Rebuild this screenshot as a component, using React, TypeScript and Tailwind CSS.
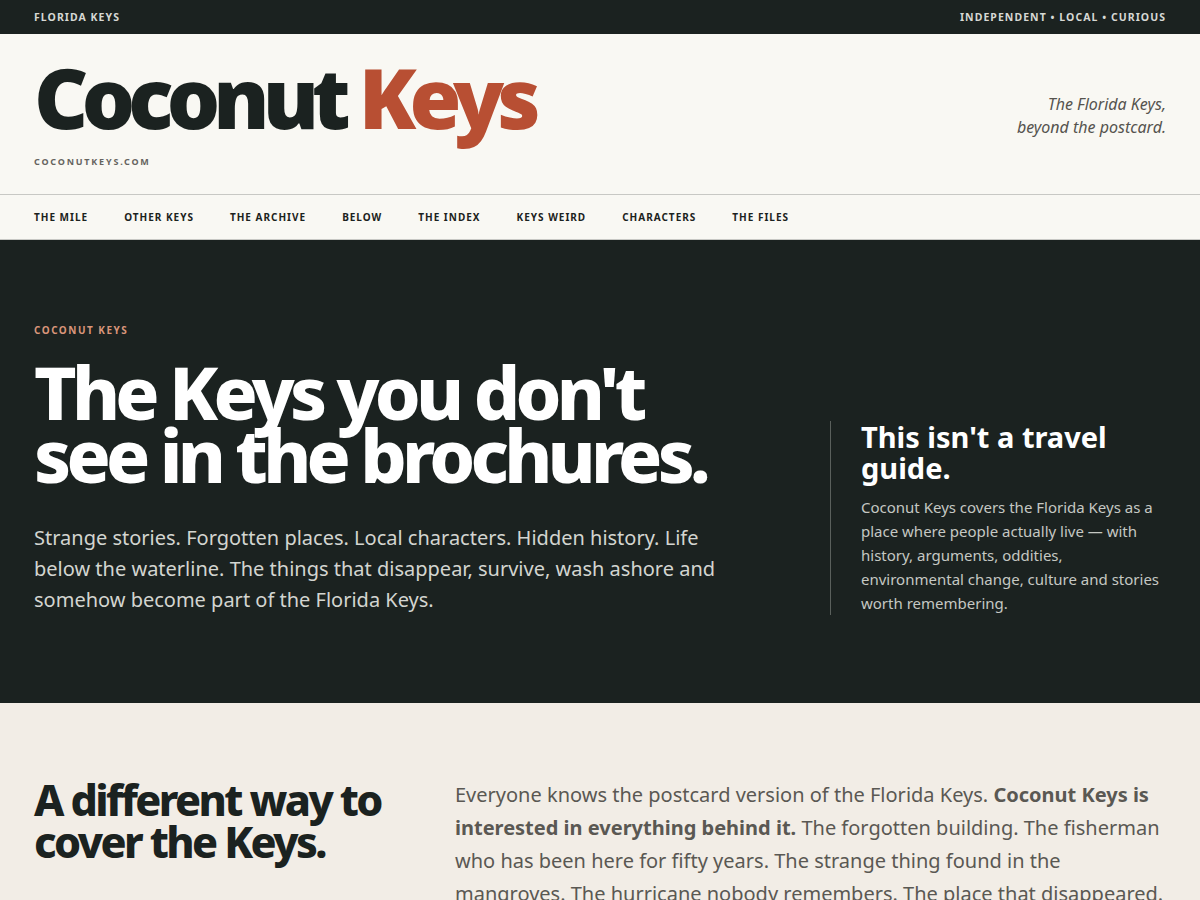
import React from "react";

const nav = ["THE MILE", "OTHER KEYS", "THE ARCHIVE", "BELOW", "THE INDEX", "KEYS WEIRD", "CHARACTERS", "THE FILES"];

export default function App() {
  return (
    <div className="min-h-[900px] bg-[#f2ede6] font-['Noto_Sans',sans-serif]">
      <div className="h-[34px] bg-[#1b2220] px-[34px] pt-[1px] flex items-center justify-between text-[10.5px] font-bold tracking-[0.1em] text-[#d6d8d4]">
        <span>FLORIDA KEYS</span>
        <span>INDEPENDENT • LOCAL • CURIOUS</span>
      </div>
      <header className="h-[161px] bg-[#f9f8f3] px-[34px] flex items-start justify-between border-b border-[#c8c8c4]">
        <div className="pt-[21px]">
          <div className="text-[84px] leading-[84px] font-black tracking-[-0.082em] text-[#1b2220]">
            Coconut <span className="text-[#b84f33]">Keys</span>
          </div>
          <div className="mt-[16px] text-[9px] leading-[13px] font-bold tracking-[0.2em] text-[#66645f]">COCONUTKEYS.COM</div>
        </div>
        <div className="self-center text-right italic text-[16px] leading-[23px] text-[#55534e] pt-[4px]">
          The Florida Keys,<br />beyond the postcard.
        </div>
      </header>
      <nav className="h-[45px] bg-[#f9f8f3] px-[34px] flex items-center gap-[36px] border-b border-[#c8c8c4] text-[10px] font-bold tracking-[0.1em] text-[#1b2220]">
        {nav.map((n) => (
          <span key={n}>{n}</span>
        ))}
      </nav>
      <section className="bg-[#1b2220] px-[34px] pt-[83px] pb-[88px] grid grid-cols-[minmax(0,1fr)_336px] gap-[60px] items-end">
        <div>
          <div className="text-[10px] leading-[15px] font-bold tracking-[0.15em] text-[#d9957a]">COCONUT KEYS</div>
          <h1 className="mt-[22px] max-w-[720px] text-[73px] leading-[63px] font-extrabold tracking-[-0.065em] text-white">
            The Keys you don't see in the brochures.
          </h1>
          <p className="mt-[36px] max-w-[700px] text-[20px] leading-[31px] text-[#d3d5d0]">
            Strange stories. Forgotten places. Local characters. Hidden history. Life below the waterline. The things that disappear, survive, wash ashore and somehow become part of the Florida Keys.
          </p>
        </div>
        <div className="border-l border-[#5a605c] pl-[30px]">
          <h2 className="text-[29px] leading-[31px] font-bold text-white">This isn't a travel guide.</h2>
          <p className="mt-[12px] text-[15px] leading-[24px] text-[#c5c8c3]">
            Coconut Keys covers the Florida Keys as a place where people actually live — with history, arguments, oddities, environmental change, culture and stories worth remembering.
          </p>
        </div>
      </section>
      <section className="bg-[#f2ede6] px-[34px] pt-[76px] pb-[60px] grid grid-cols-[380px_minmax(0,1fr)] gap-[41px]">
        <h2 className="text-[43px] leading-[42px] font-extrabold tracking-[-0.06em] text-[#1b2220]">A different way to cover the Keys.</h2>
        <p className="-mt-[1px] text-[20px] leading-[33px] text-[#5a5853] max-w-[712px]">
          Everyone knows the postcard version of the Florida Keys. <strong className="font-bold">Coconut Keys is interested in everything behind it.</strong> The forgotten building. The fisherman who has been here for fifty years. The strange thing found in the mangroves. The hurricane nobody remembers. The place that disappeared.
        </p>
      </section>
    </div>
  );
}
